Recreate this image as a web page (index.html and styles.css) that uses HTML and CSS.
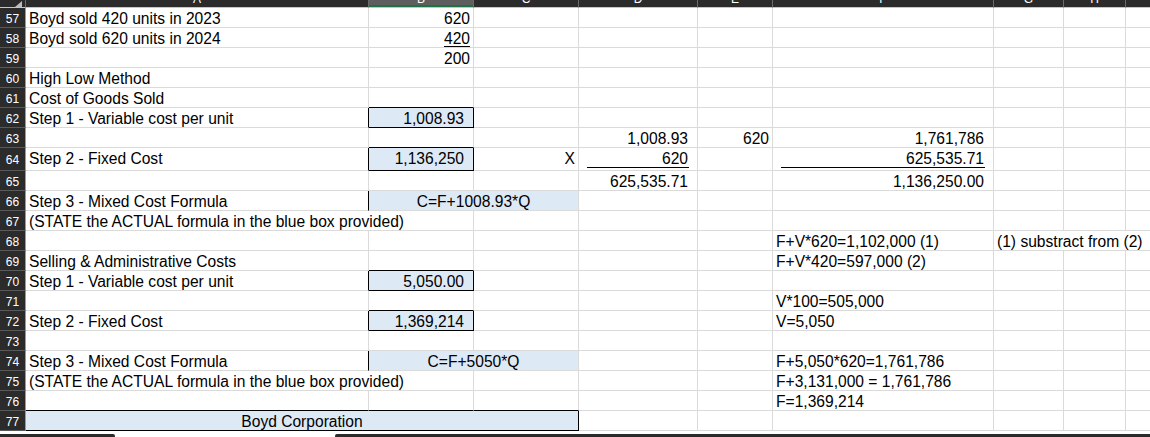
FILE: index.html
```html
<!DOCTYPE html>
<html>
<head>
<meta charset="utf-8">
<link rel="stylesheet" href="styles.css">
</head>
<body>
<div class="sheet">
<table class="grid">
  <colgroup>
    <col class="w-rh"><col class="w-a"><col class="w-b"><col class="w-c"><col class="w-d"><col class="w-e"><col class="w-f"><col class="w-g"><col class="w-h"><col class="w-i">
  </colgroup>
  <tr class="hdr">
    <td class="corner"><div class="corner-in"><span class="tri"></span></div></td>
    <td class="ch"><div class="ch-in"><span>A</span></div></td>
    <td class="ch sel"><div class="ch-in"><span>B</span></div></td>
    <td class="ch"><div class="ch-in"><span>C</span></div></td>
    <td class="ch"><div class="ch-in"><span>D</span></div></td>
    <td class="ch"><div class="ch-in"><span>E</span></div></td>
    <td class="ch"><div class="ch-in"><span>F</span></div></td>
    <td class="ch"><div class="ch-in"><span>G</span></div></td>
    <td class="ch"><div class="ch-in"><span>H</span></div></td>
    <td class="ch"><div class="ch-in"><span>I</span></div></td>
  </tr>
  <tr>
    <td class="rh">57</td><td>Boyd sold 420 units in 2023</td><td class="r">620</td><td></td><td></td><td></td><td></td><td></td><td></td><td></td>
  </tr>
  <tr>
    <td class="rh">58</td><td>Boyd sold 620 units in 2024</td><td class="r"><span class="u">420</span></td><td></td><td></td><td></td><td></td><td></td><td></td><td></td>
  </tr>
  <tr>
    <td class="rh">59</td><td></td><td class="r">200</td><td></td><td></td><td></td><td></td><td></td><td></td><td></td>
  </tr>
  <tr>
    <td class="rh">60</td><td>High Low Method</td><td></td><td></td><td></td><td></td><td></td><td></td><td></td><td></td>
  </tr>
  <tr>
    <td class="rh">61</td><td>Cost of Goods Sold</td><td class="bB"></td><td></td><td></td><td></td><td></td><td></td><td></td><td></td>
  </tr>
  <tr>
    <td class="rh">62</td><td class="bR">Step 1 - Variable cost per unit</td><td class="fill bR bB r acc">1,008.93</td><td></td><td></td><td></td><td></td><td></td><td></td><td></td>
  </tr>
  <tr>
    <td class="rh">63</td><td></td><td class="bB"></td><td></td><td class="r acc">1,008.93</td><td class="r">620</td><td class="r acc">1,761,786</td><td></td><td></td><td></td>
  </tr>
  <tr class="tall">
    <td class="rh">64</td><td class="bR">Step 2 - Fixed Cost</td><td class="fill bR bB r acc">1,136,250</td><td class="r">X</td><td class="ul"><div class="ul-in">620</div></td><td></td><td class="ul"><div class="ul-in">625,535.71</div></td><td></td><td></td><td></td>
  </tr>
  <tr>
    <td class="rh">65</td><td></td><td></td><td></td><td class="r acc">625,535.71</td><td></td><td class="r acc">1,136,250.00</td><td></td><td></td><td></td>
  </tr>
  <tr>
    <td class="rh">66</td><td class="bR">Step 3 - Mixed Cost Formula</td><td class="fill c" colspan="2">C=F+1008.93*Q</td><td></td><td></td><td></td><td></td><td></td><td></td>
  </tr>
  <tr>
    <td class="rh">67</td><td colspan="2">(STATE the ACTUAL formula in the blue box provided)</td><td></td><td></td><td></td><td></td><td></td><td></td><td></td>
  </tr>
  <tr>
    <td class="rh">68</td><td></td><td></td><td></td><td></td><td></td><td>F+V*620=1,102,000 (1)</td><td colspan="3">(1) substract from (2)</td>
  </tr>
  <tr>
    <td class="rh">69</td><td>Selling &amp; Administrative Costs</td><td class="bB"></td><td></td><td></td><td></td><td>F+V*420=597,000 (2)</td><td></td><td></td><td></td>
  </tr>
  <tr>
    <td class="rh">70</td><td class="bR">Step 1 - Variable cost per unit</td><td class="fill bR bB r acc">5,050.00</td><td></td><td></td><td></td><td></td><td></td><td></td><td></td>
  </tr>
  <tr>
    <td class="rh">71</td><td></td><td class="bB"></td><td></td><td></td><td></td><td>V*100=505,000</td><td></td><td></td><td></td>
  </tr>
  <tr>
    <td class="rh">72</td><td class="bR">Step 2 - Fixed Cost</td><td class="fill bR bB r acc">1,369,214</td><td></td><td></td><td></td><td>V=5,050</td><td></td><td></td><td></td>
  </tr>
  <tr>
    <td class="rh">73</td><td></td><td></td><td></td><td></td><td></td><td></td><td></td><td></td><td></td>
  </tr>
  <tr>
    <td class="rh">74</td><td class="bR">Step 3 - Mixed Cost Formula</td><td class="fill c" colspan="2">C=F+5050*Q</td><td></td><td></td><td>F+5,050*620=1,761,786</td><td></td><td></td><td></td>
  </tr>
  <tr>
    <td class="rh">75</td><td colspan="2">(STATE the ACTUAL formula in the blue box provided)</td><td></td><td></td><td></td><td>F+3,131,000 = 1,761,786</td><td></td><td></td><td></td>
  </tr>
  <tr>
    <td class="rh">76</td><td class="bB"></td><td class="bB"></td><td class="bB"></td><td></td><td></td><td>F=1,369,214</td><td></td><td></td><td></td>
  </tr>
  <tr>
    <td class="rh">77</td><td class="fill bR bB c" colspan="3">Boyd Corporation</td><td></td><td></td><td></td><td></td><td></td><td></td>
  </tr>
</table>
<div class="bottom">
  <div class="bar bar-left"></div>
  <div class="bar-gap"></div>
  <div class="bar bar-right"></div>
</div>
</div>
</body>
</html>
```

FILE: styles.css
```css
html, body {
  margin: 0;
  padding: 0;
  background: #ffffff;
  overflow: hidden;
}

.sheet {
  width: 1150px;
  height: 437px;
  overflow: hidden;
}

.grid {
  border-collapse: separate;
  border-spacing: 0;
  table-layout: fixed;
  width: 1226px;
  font-family: "Liberation Sans", Arial, sans-serif;
  font-size: 15.6px;
  color: #000;
}

.w-rh { width: 26px; }
.w-a { width: 343px; }
.w-b { width: 105px; }
.w-c { width: 105px; }
.w-d { width: 119px; }
.w-e { width: 75px; }
.w-f { width: 221px; }
.w-g { width: 70px; }
.w-h { width: 62px; }
.w-i { width: 100px; }

.grid tr { height: 20px; }
.grid tr.tall { height: 23px; }
.grid tr.hdr { height: 8px; }

.grid td {
  box-sizing: border-box;
  border-right: 1px solid #dadada;
  border-bottom: 1px solid #dadada;
  padding: 0 3px;
  white-space: nowrap;
  vertical-align: bottom;
  overflow: visible;
  line-height: 16px;
}

.grid tr.tall td { padding-bottom: 3px; }
.grid tr.tall td.ul { padding-bottom: 2px; }

/* header row */
.grid td.corner,
.grid td.ch {
  padding: 0;
  background: #2b2b2b;
  border-right: 1px solid #6a6a6a;
  border-bottom: 1px solid #c6c6c6;
  vertical-align: top;
}

.corner-in {
  height: 7px;
  display: flex;
  justify-content: flex-end;
  align-items: flex-end;
  padding-right: 3px;
}

.tri {
  width: 0;
  height: 0;
  border-left: 7px solid transparent;
  border-bottom: 6px solid #bdbdbd;
}

.ch-in {
  height: 7px;
  overflow: hidden;
  text-align: center;
  color: #ffffff;
  font-size: 12px;
  line-height: 12px;
}

.ch-in span {
  display: block;
  margin-top: -7px;
}

.grid td.ch.sel {
  background: #5e5e5e;
}

.grid td.ch.sel .ch-in {
  box-sizing: border-box;
  border-bottom: 2px solid #1e7145;
}

/* row headers */
.grid td.rh {
  background: #2b2b2b;
  color: #ffffff;
  font-size: 12px;
  line-height: 14px;
  text-align: center;
  padding: 0 0 1px 0;
  border-right: 1px solid #9a9a9a;
  border-bottom: 1px solid #5a5a5a;
}

/* alignment */
.r { text-align: right; }
.c { text-align: center; }
.grid td.acc { padding-right: 9px; }
.grid td.r { padding-right: 3px; }
.grid td.r.acc { padding-right: 9px; }

.u { text-decoration: underline; text-underline-offset: 2px; }

/* borders & fills */
.grid td.bR { border-right-color: #000000; }
.grid td.bB { border-bottom-color: #000000; }
.fill { background: #dde9f5; }

/* accounting underline */
.grid td.ul { padding-left: 8px; padding-right: 8px; }
.ul-in {
  border-bottom: 1px solid #000000;
  text-align: right;
  padding-right: 1px;
}

/* bottom strip */
.bottom {
  height: 7px;
  display: flex;
  align-items: flex-end;
}

.bar {
  height: 4px;
  background: #2b2b2b;
}

.bar-left {
  width: 115px;
  border-radius: 0 3px 3px 0;
}

.bar-gap {
  width: 220px;
}

.bar-right {
  flex: 1;
  border-radius: 3px 0 0 3px;
}
```
